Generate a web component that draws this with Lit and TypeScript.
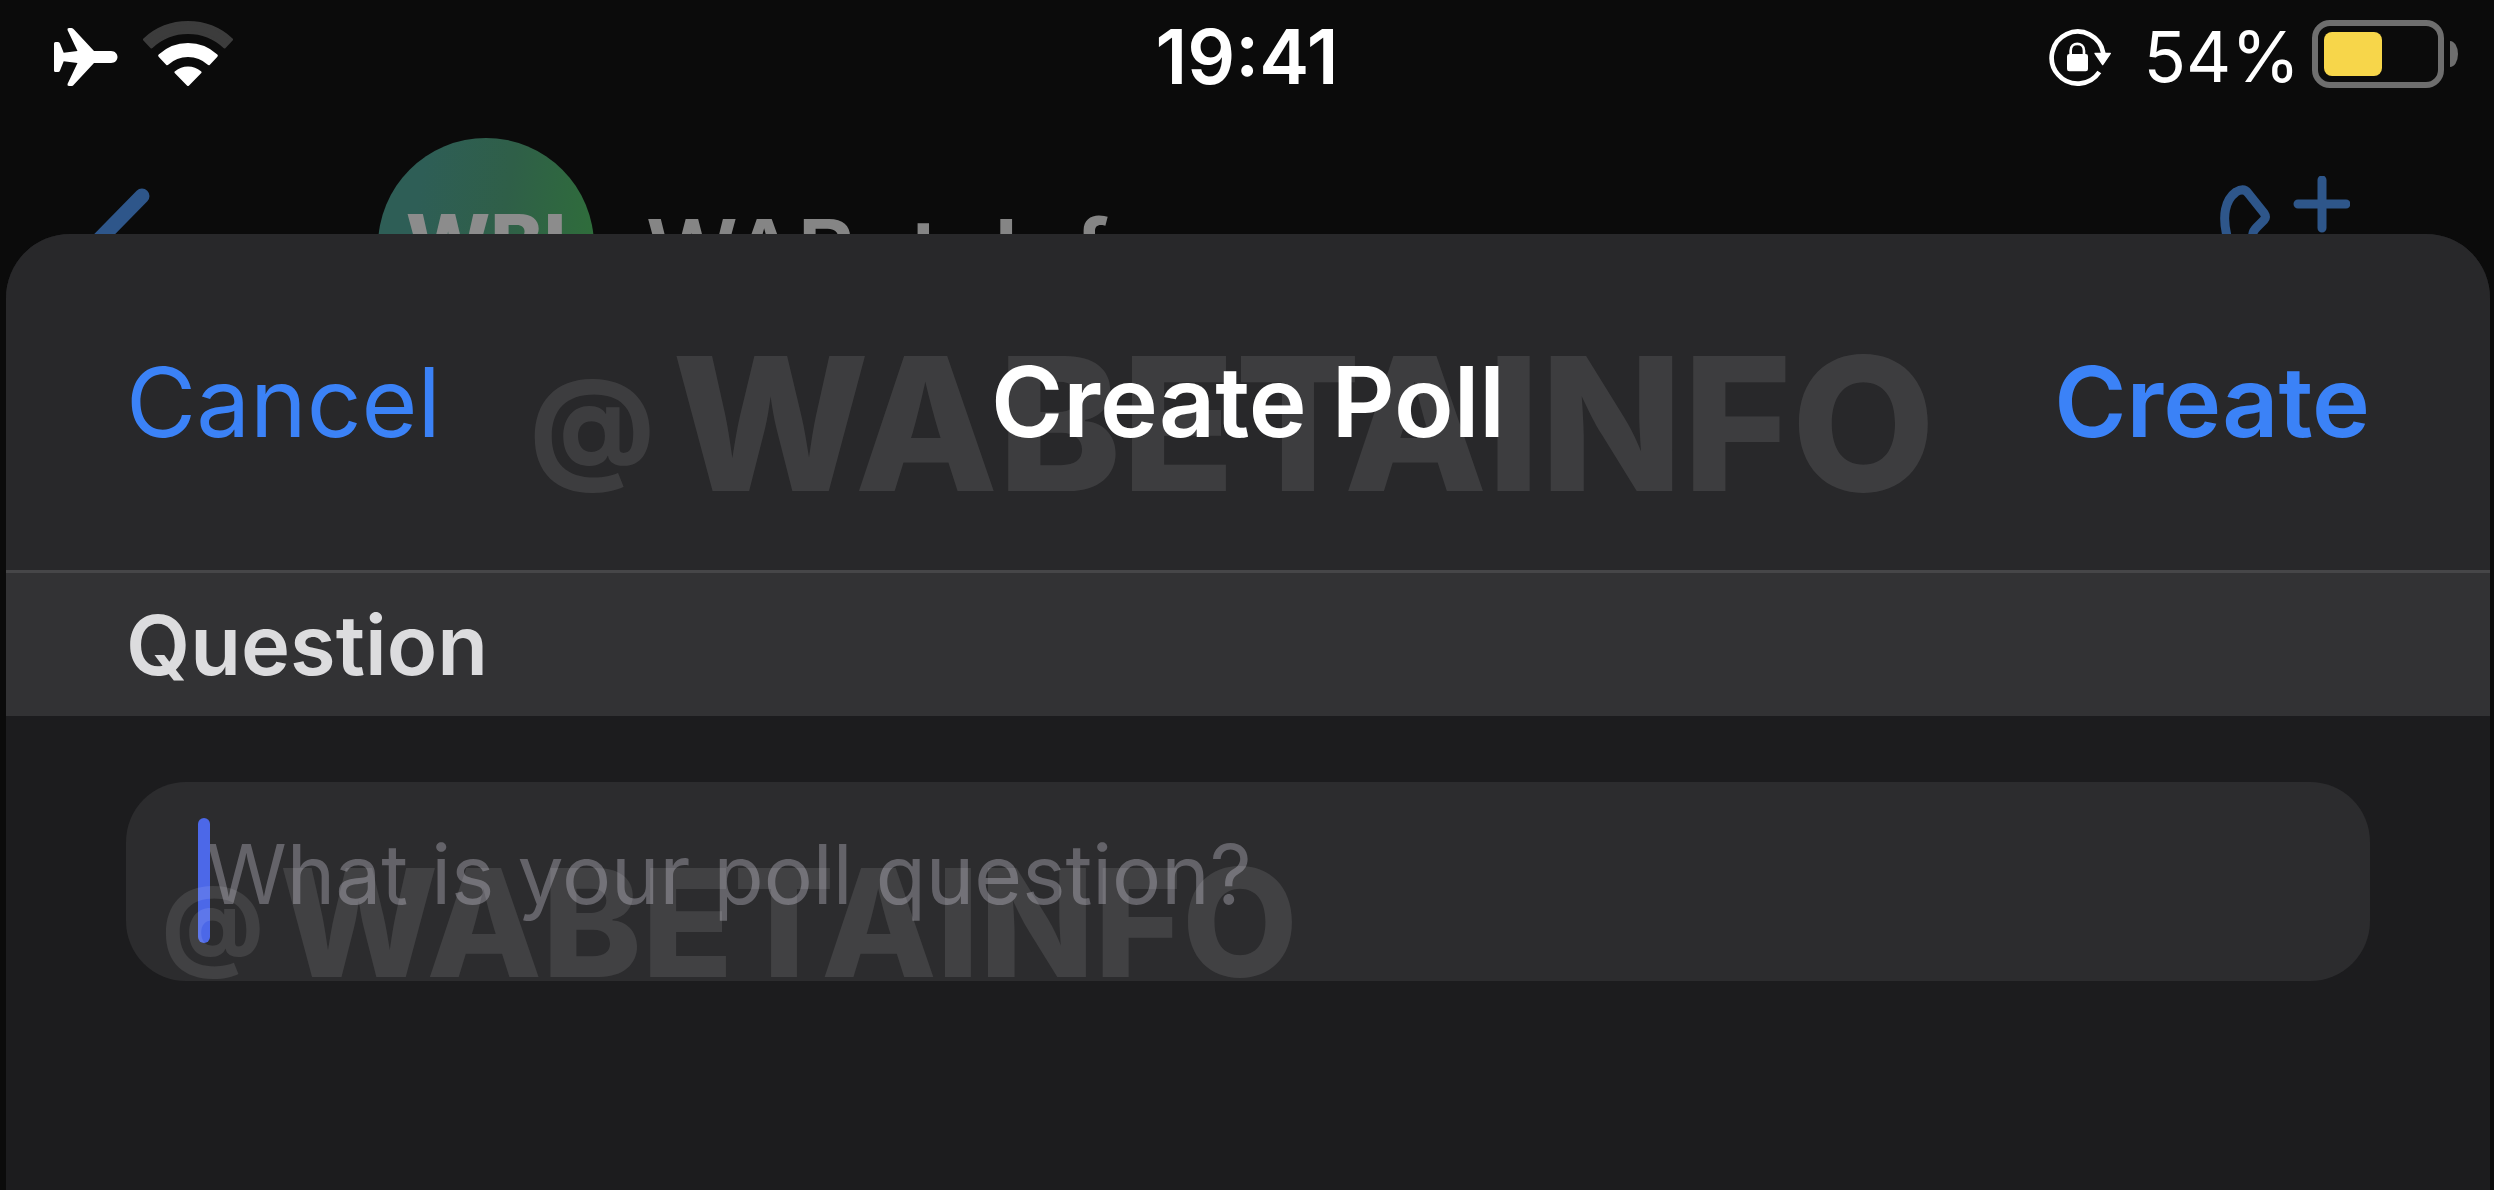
import { LitElement, html, css } from "lit";
import { customElement, property } from "lit/decorators.js";

@customElement("status-bar")
class StatusBar extends LitElement {
  @property() time = "";
  @property({ type: Number }) battery = 0;

  static styles = css`
    :host {
      display: grid;
      grid-template-columns: 1fr auto 1fr;
      align-items: center;
      height: 114px;
      color: #fff;
      font-size: 70px;
      line-height: 84px;
    }
    svg {
      display: block;
      flex: none;
    }
    .left,
    .right {
      display: flex;
      align-items: center;
    }
    .left {
      gap: 25px;
      padding-left: 54px;
    }
    .wifi {
      margin-bottom: 8px;
    }
    .time {
      font-size: 75px;
      font-weight: 600;
    }
    .right {
      justify-content: flex-end;
      padding-right: 36px;
    }
    .percent {
      margin-left: 32px;
      margin-right: 12px;
    }
    .battery {
      box-sizing: border-box;
      width: 132px;
      height: 68px;
      margin-bottom: 6px;
      padding: 6px;
      border: 6px solid #6e6e6e;
      border-radius: 18px;
    }
    .level {
      height: 100%;
      border-radius: 8px;
      background: #f7d64a;
    }
    .nub {
      width: 8px;
      height: 26px;
      margin-left: 6px;
      margin-bottom: 6px;
      border-radius: 0 8px 8px 0 / 0 13px 13px 0;
      background: #6e6e6e;
    }
  `;

  render() {
    return html`
      <div class="left">
        <svg width="64" height="58" viewBox="0 0 64 58" fill="#fff" aria-label="Airplane mode">
          <path
            d="M0 15.5Q0 14 1.500 14H4Q5.500 14 6 15.500L9.700 24.700L23.500 23L13.500 2Q13 0 15 0H17.500Q19 0 20 1.500L40 23H57C61 23 63.500 26 63.500 29S61 35 57 35H40L20 56.500Q19 58 17.500 58H15Q13 58 13.500 56L23.500 35L9.700 33.300L6 42.500Q5.500 44 4 44H1.500Q0 44 0 42.500Z"
          />
        </svg>
        <svg class="wifi" width="90" height="66" viewBox="0 0 90 66" stroke-width="3" stroke-linejoin="round" aria-label="Wi-Fi">
          <path d="M1.500 19.500A64.500 64.500 0 0 1 88.500 19.500L81.500 26.900A53.500 53.500 0 0 0 8.500 26.900Z" fill="#3c3c3c" stroke="#3c3c3c" />
          <path d="M16.700 35.700A41.500 41.500 0 0 1 73.300 35.700L65.800 43.700A30.500 30.500 0 0 0 24.200 43.700Z" fill="#fff" stroke="#fff" />
          <path d="M33 52.300A18.500 18.500 0 0 1 57 52.300L45 64.500Z" fill="#fff" stroke="#fff" />
        </svg>
      </div>
      <div class="time">${this.time}</div>
      <div class="right">
        <svg width="64" height="59" viewBox="0 0 192 177" aria-label="Rotation lock">
          <path d="M157 132A78 78 0 1 1 169 76" fill="none" stroke="#fff" stroke-width="14" />
          <path d="M144 76H190L167 110Z" fill="#fff" stroke="#fff" stroke-width="4" stroke-linejoin="round" />
          <rect x="60" y="78" width="63" height="52" rx="7" fill="#fff" />
          <path d="M71 82V68C71 41 111 41 111 68V82" fill="none" stroke="#fff" stroke-width="8" />
        </svg>
        <span class="percent">${this.battery}%</span>
        <div class="battery"><div class="level" style="width:${this.battery}%"></div></div>
        <div class="nub"></div>
      </div>
    `;
  }
}

@customElement("chat-header")
class ChatHeader extends LitElement {
  @property() name = "";
  @property() initials = "";

  static styles = css`
    :host {
      display: block;
      height: 120px;
      overflow: hidden;
    }
    .row {
      display: flex;
      align-items: center;
      height: 216px;
      margin-top: 24px;
      padding: 0 144px 0 84px;
    }
    svg {
      display: block;
      flex: none;
    }
    .avatar {
      display: flex;
      align-items: center;
      justify-content: center;
      box-sizing: border-box;
      width: 216px;
      height: 216px;
      margin-left: 226px;
      padding-bottom: 8px;
      border-radius: 50%;
      background: linear-gradient(100deg, #2e5e56 20%, #2f5f48 55%, #2f7038 100%);
      color: #8c8c8c;
      font-size: 80px;
      font-weight: 800;
    }
    .name {
      margin-left: 52px;
      padding-top: 10px;
      flex: 1;
      color: #858585;
      font-size: 90px;
      font-weight: 600;
    }
  `;

  render() {
    return html`
      <div class="row">
        <svg width="68" height="116" viewBox="0 0 68 116" fill="none" stroke="#2e568a" stroke-width="15" stroke-linecap="round" stroke-linejoin="round">
          <path d="M58 8L9 58L58 108" />
        </svg>
        <div class="avatar">${this.initials}</div>
        <div class="name">${this.name}</div>
        <svg width="136" height="140" viewBox="0 0 136 140" fill="none" stroke="#2e568a" stroke-width="9" stroke-linecap="round" stroke-linejoin="round">
          <path
            d="M50 44L43 51C37 57 38 60 42 66C50 77 58 86 69 93C75 97 78 97 84 91L88 87C91 84 94 84 97 87L116 103C119 106 119 109 117 112C108 128 94 134 78 128C46 115 22 90 13 60C8 40 11 24 22 16C27 13 31 13 34 17L50 37C52 40 52 42 50 44Z"
          />
          <path d="M84 28H132M108 4V52" />
        </svg>
      </div>
    `;
  }
}

@customElement("poll-sheet")
class PollSheet extends LitElement {
  static styles = css`
    :host {
      display: flex;
      flex-direction: column;
      margin: 0 4px 0 6px;
      border-radius: 64px 64px 0 0;
      background: #1c1c1e;
      overflow: hidden;
    }
    .header {
      position: relative;
      display: grid;
      grid-template-columns: 1fr auto 1fr;
      align-items: center;
      height: 336px;
      padding: 0 120px;
      border-bottom: 3px solid #464648;
      background: #28282a;
    }
    button {
      padding: 0;
      border: 0;
      background: none;
      color: #3b82f7;
      font: inherit;
      font-size: 98px;
      line-height: 120px;
    }
    .cancel {
      justify-self: start;
      font-size: 96px;
    }
    .create {
      justify-self: end;
      font-weight: 600;
    }
    h1 {
      margin: 0;
      color: #fff;
      font-size: 98px;
      font-weight: 600;
      line-height: 120px;
    }
    .section {
      display: flex;
      align-items: center;
      height: 143px;
      padding: 0 120px;
      background: #323234;
      color: #dcdcde;
      font-size: 83px;
      font-weight: 600;
      line-height: 100px;
    }
    .field {
      position: relative;
      margin: 66px 120px 0;
      border-radius: 60px;
      background: #2c2c2e;
    }
    input {
      display: block;
      box-sizing: border-box;
      width: 100%;
      height: 199px;
      padding: 0 60px 14px 80px;
      border: 0;
      outline: 0;
      background: none;
      color: #fff;
      caret-color: transparent;
      font: inherit;
      font-size: 82px;
    }
    input::placeholder {
      color: #646369;
      opacity: 1;
    }
    .caret {
      position: absolute;
      left: 72px;
      top: 36px;
      width: 12px;
      height: 125px;
      border-radius: 6px;
      background: #4c68e8;
    }
    .mark {
      position: absolute;
      display: flex;
      align-items: center;
      color: rgba(255, 255, 255, 0.1);
      font-weight: 800;
      white-space: nowrap;
      pointer-events: none;
    }
    .mark-header {
      left: 524px;
      top: 90px;
      gap: 18px;
      font-size: 186px;
      line-height: 200px;
    }
    .mark-header .at {
      font-size: 120px;
    }
    .mark-field {
      left: 36px;
      top: 61px;
      gap: 16px;
      font-size: 150px;
      line-height: 160px;
    }
    .mark-field .at {
      font-size: 98px;
    }
  `;

  render() {
    return html`
      <header class="header">
        <button class="cancel" type="button">Cancel</button>
        <h1>Create Poll</h1>
        <button class="create" type="button">Create</button>
        <div class="mark mark-header"><span class="at">@</span><span>WABETAINFO</span></div>
      </header>
      <label class="section" for="question">Question</label>
      <div class="field">
        <input id="question" type="text" placeholder="What is your poll question?" />
        <div class="caret"></div>
        <div class="mark mark-field"><span class="at">@</span><span>WABETAINFO</span></div>
      </div>
    `;
  }
}

@customElement("app-root")
class AppRoot extends LitElement {
  static styles = css`
    :host {
      display: flex;
      flex-direction: column;
      min-height: 100vh;
      background: #0b0b0b;
      font-family: Inter, "Liberation Sans", sans-serif;
    }
    poll-sheet {
      flex: 1;
    }
  `;

  render() {
    return html`
      <status-bar time="19:41" battery="54"></status-bar>
      <chat-header name="WABetaInfo" initials="WBI"></chat-header>
      <poll-sheet></poll-sheet>
    `;
  }
}
